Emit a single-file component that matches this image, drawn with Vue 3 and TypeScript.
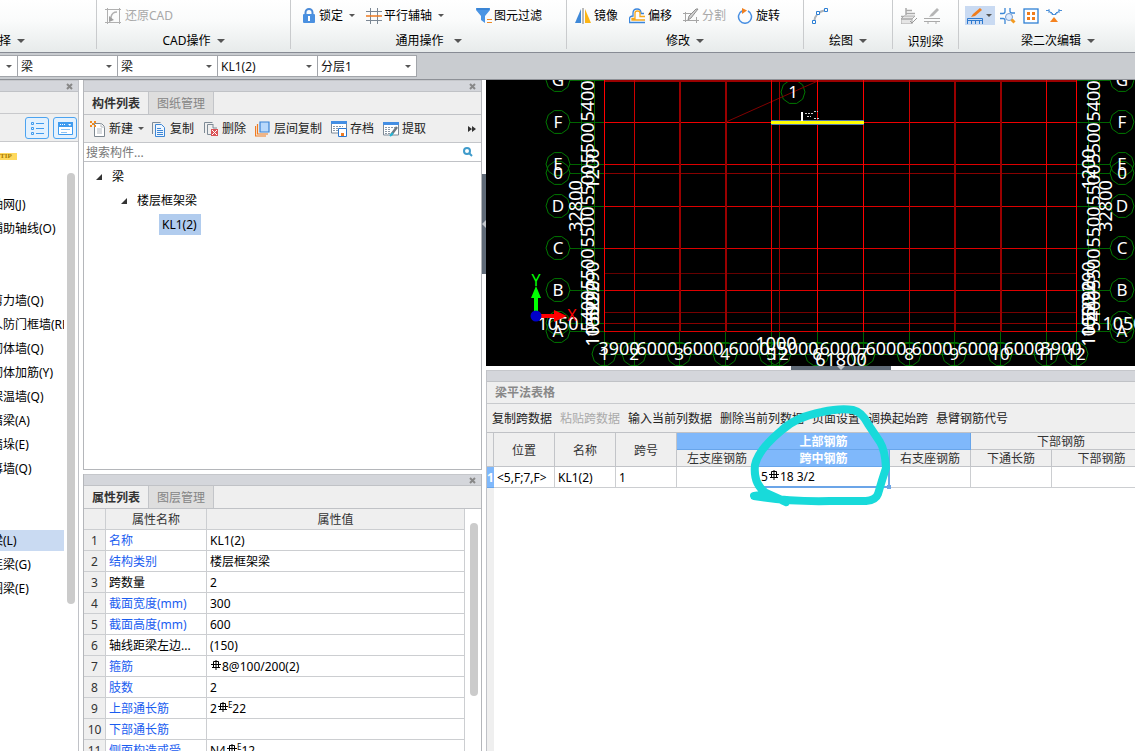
<script setup lang="ts">
import { ref } from 'vue'

interface Tool { icon: string; label?: string; aria?: string; caret?: boolean; off?: boolean; active?: boolean }
interface Group { name: string; title: string; caret: boolean; tools: Tool[] }

const icons: Record<string, string> = {
  restore: '<g fill="none" stroke="#b0b0b0"><path d="M2.500 0V16M14.500 0V16M0 1.500H16M0 14.500H16"/><path d="M6 12V9q1-5 6-5" stroke-width="1.500"/></g><path d="M4 8l5 4-5 2z" fill="#a0a0a0"/>',
  lock: '<path d="M4.500 7V4.500a3.500 3.500 0 0 1 7 0V7" fill="none" stroke="#4b8bd8" stroke-width="2"/><rect x="2" y="6" width="12" height="9" rx="1" fill="#4a90e0"/><path d="M8 8v5M7 9.500h2" stroke="#fff" stroke-width="2"/>',
  hash: '<path d="M4.500 0V16M11.500 0V16M0 3.500H16M0 12.500H16" stroke="#7b8794" fill="none"/><path d="M0 8H16" stroke="#ee7b22" stroke-width="1.500"/>',
  filter: '<path d="M0 0h14v2L9 8v7l-4-3V8L0 2z" fill="#4b95e4"/><path d="M1 1h12" stroke="#2c74c4"/><path d="M11 11.500h5M11 14.500h5" stroke="#f08a24"/>',
  mirror: '<path d="M6 1v14H0z" fill="#3e88d8"/><path d="M10 1v14h6z" fill="#fdb515"/><path d="M8 0v16" stroke="#777"/>',
  offset: '<path d="M15 5.500h-3V5q0-4-4-4T4 5v3q-3.500 0-3.500 3v3.500H16" fill="none" stroke="#3b86dc" stroke-width="1.300"/><path d="M16 8.500h-5V5q0-2-2.500-2T6 5v5.500H3q0 1 0 1.500h13" fill="none" stroke="#f6a81c" stroke-width="1.300"/>',
  split: '<path d="M2.500 4v10M0 5.500h9M0 12.500h16M13.500 9v6" stroke="#a6a6a6" fill="none"/><path d="M15 1L8 10l-3 2 1-4 7-7z" fill="#d0d0d0" stroke="#8f8f8f"/>',
  rotate: '<path d="M11 3a6.500 6.500 0 1 1-6 0" fill="none" stroke="#4a90e2" stroke-width="1.500"/><path d="M5 0l5 2.500L5 6z" fill="#f08020"/>',
  arc: '<path d="M2 14Q3 4 14 2" fill="none" stroke="#aeb4ba" stroke-width="2"/><g fill="#fff" stroke="#2d7fd4"><path d="M.500 12.500h3v3h-3zM4.500 3.500h3v3h-3zM12.500.500h3v3h-3z"/></g>',
  detect: '<path d="M5 0v7M5 2.500h6M5 5.500h9M0 8.500h5" stroke="#aaa" stroke-width="1.500" fill="none"/><path d="M3 8h11l-3 3H0zM0 11h11v5H0z" fill="#e5e5e5" stroke="#aaa"/><path d="M9 13l2 2 5-5" fill="none" stroke="#999"/>',
  mark: '<path d="M0 10.500h16M0 13.500h16M4 13v3M12 13v3" stroke="#aaa" fill="none"/><path d="M13 0l2 2-6 6-4 1 2-3z" fill="#b5b5b5"/>',
  annotate: '<path d="M.500 16V10.500h15V16M4.500 16v-3M8.500 16v-3M12.500 16v-3M0 12.500h16" stroke="#2f7bd0" fill="none"/><path d="M13 0l2 2-7 6-4 1 2-3z" fill="#f07c1c"/>',
  inspect: '<g stroke="#3c88d8" fill="none" stroke-width="1.300"><path d="M0 5.500h3q2 0 2-2V0M10 0v3q0 2 2 2h3M0 10.500h3q2 0 2 2V16"/></g><circle cx="9" cy="9" r="3.500" fill="#dcebff" stroke="#729bd0"/><path d="M11.500 11.500l3 3" stroke="#f39a20" stroke-width="3"/>',
  points: '<rect x="1" y="1" width="14" height="14" fill="#fff" stroke="#2f80d5" stroke-width="1.300"/><path d="M4 4h3v3H4zM9 4h3v3H9zM4 9h3v3H4zM9 9h3v3H9z" fill="#f07c1c"/>',
  hanger: '<path d="M0 2.500h3l3 4h4l3-4h3M3 5v-4M13 5v-4M7 6l-2-2M9 6l2-2" fill="none" stroke="#4b8fd8"/><path d="M8 9l4 5H4z" fill="#f58320"/>',
  add: '<path d="M4.500 2.500h7l3 3v10h-10z" fill="#fff" stroke="#7d8790"/><path d="M11 2v4h4M7 8h5M7 10h5M7 12h5" fill="none" stroke="#b4bac0"/><path d="M0 0h2v2H0zM4 0h2v2H4zM2 2h2v2H2zM0 4h2v2H0zM4 4h2v2H4z" fill="#f08b20"/>',
  copy: '<path d="M1.500 13V1.500h8" fill="none" stroke="#7b8b9a"/><path d="M4.500 3.500h6l3 3v9h-9z" fill="#eef6ff" stroke="#3d86d5"/><path d="M6 7.500h4M6 9.500h6M6 11.500h6M6 13.500h6" stroke="#3d86d5"/>',
  remove: '<path d="M1.500 12V1.500h8M10 3.500H4.500v10H8M10 3v4h4" fill="none" stroke="#7e8b96"/><path d="M8 8h7v7H8z" fill="#db5357"/><path d="M9 9l5 5M14 9l-5 5" stroke="#fff"/>',
  layers: '<path d="M.500 5v10H11M2.500 3v10H13" fill="none" stroke="#f07c22" stroke-width="1.200"/><path d="M5 1h9v10H5z" fill="#b8d8fb" stroke="#3982d5" stroke-width="1.200"/>',
  archive: '<path d="M.500 1h15v11H.500z" fill="#fff" stroke="#7c8996"/><path d="M0 0h16v3H0z" fill="#438ee3"/><path d="M2 5.500h10M2 7.500h5M2 9.500h5" stroke="#8b98a5" stroke-dasharray="2 1"/><path d="M7.500 7.500h8v8h-8z" fill="#fff" stroke="#2b76cf"/><path d="M10 12h3v3h-3z" fill="#f07c22"/>',
  extract: '<path d="M.500 2h15v12H.500z" fill="#fff" stroke="#7c8996"/><path d="M0 1h16v3H0z" fill="#438ee3"/><path d="M2 6.500h10M2 8.500h6M2 10.500h6M2 12.500h5" stroke="#8b98a5" stroke-dasharray="2 1"/><path d="M8 14l6-8" stroke="#6d7780" stroke-width="2.500"/><path d="M7 15l3-3" stroke="#22b7d8" stroke-width="2"/>',
}

const groups: Group[] = [
  { name: 'pick', title: '选择', caret: true, tools: [] },
  { name: 'cad', title: 'CAD操作', caret: true, tools: [{ icon: 'restore', label: '还原CAD', off: true }] },
  { name: 'common', title: '通用操作', caret: true, tools: [
    { icon: 'lock', label: '锁定', caret: true }, { icon: 'hash', label: '平行辅轴', caret: true }, { icon: 'filter', label: '图元过滤' }] },
  { name: 'modify', title: '修改', caret: true, tools: [
    { icon: 'mirror', label: '镜像' }, { icon: 'offset', label: '偏移' }, { icon: 'split', label: '分割', off: true }, { icon: 'rotate', label: '旋转' }] },
  { name: 'draw', title: '绘图', caret: true, tools: [{ icon: 'arc', aria: '弧线' }] },
  { name: 'detect', title: '识别梁', caret: false, tools: [{ icon: 'detect', aria: '识别', off: true }, { icon: 'mark', aria: '标注', off: true }] },
  { name: 'edit', title: '梁二次编辑', caret: true, tools: [
    { icon: 'annotate', aria: '原位标注', caret: true, active: true }, { icon: 'inspect', aria: '查看' }, { icon: 'points', aria: '支座' }, { icon: 'hanger', aria: '吊筋' }] },
]

const filters = [
  { name: '楼层', value: '' }, { name: '类别', value: '梁' }, { name: '类型', value: '梁' },
  { name: '构件', value: 'KL1(2)' }, { name: '分层', value: '分层1' },
]

const navItems = ['轴网(J)', '辅助轴线(O)', '', '', '剪力墙(Q)', '人防门框墙(RF)', '砌体墙(Q)', '砌体加筋(Y)', '保温墙(Q)',
  '暗梁(A)', '墙垛(E)', '幕墙(Q)', '', '', '梁(L)', '连梁(G)', '圈梁(E)']
const current = ref('梁(L)')

const listTools: Tool[] = [
  { icon: 'add', label: '新建', caret: true }, { icon: 'copy', label: '复制' }, { icon: 'remove', label: '删除' },
  { icon: 'layers', label: '层间复制' }, { icon: 'archive', label: '存档' }, { icon: 'extract', label: '提取' },
]
const search = ref('')

// "#" stands for the bar-grade sign, "~" for its seismic variant
const properties = [
  { name: '名称', value: 'KL1(2)', key: true }, { name: '结构类别', value: '楼层框架梁', key: true },
  { name: '跨数量', value: '2', key: false }, { name: '截面宽度(mm)', value: '300', key: true },
  { name: '截面高度(mm)', value: '600', key: true }, { name: '轴线距梁左边...', value: '(150)', key: false },
  { name: '箍筋', value: '#8@100/200(2)', key: true }, { name: '肢数', value: '2', key: true },
  { name: '上部通长筋', value: '2~22', key: true }, { name: '下部通长筋', value: '', key: true },
  { name: '侧面构造或受...', value: 'N4~12', key: true },
]
const parts = (value: string) => value.split(/([#~])/).filter(Boolean)

const tableTools = ['复制跨数据', '粘贴跨数据', '输入当前列数据', '删除当前列数据', '页面设置', '调换起始跨', '悬臂钢筋代号']

const columns = [
  { x: 604, c: '#f00', w: 1, n: '1' }, { x: 634, c: '#c00', w: 1, n: '2' }, { x: 679, c: '#900', w: 2, n: '3' },
  { x: 725, c: '#900', w: 2, n: '4' }, { x: 771, c: '#e00', w: 1, n: '5' }, { x: 779, c: '#900', w: 1, n: '12' },
  { x: 817, c: '#f00', w: 1, n: '6' }, { x: 863, c: '#f00', w: 1, n: '7' }, { x: 909, c: '#c00', w: 1, n: '8' },
  { x: 954, c: '#900', w: 2, n: '9' }, { x: 1000, c: '#900', w: 2, n: '10' }, { x: 1046, c: '#e00', w: 1, n: '11' },
  { x: 1076, c: '#f00', w: 1, n: '12' },
]
const rows = [
  { y: 80, c: '#900', n: 'G' }, { y: 122, c: '#e00', n: 'F' }, { y: 164, c: '#d00', n: 'E' }, { y: 173, c: '#800', n: '0' },
  { y: 206, c: '#d00', n: 'D' }, { y: 248, c: '#d00', n: 'C' }, { y: 273, c: '#600', n: '' }, { y: 290, c: '#d00', n: 'B' },
  { y: 312, c: '#700', n: '' }, { y: 323, c: '#800', n: ' ' }, { y: 331, c: '#d00', n: 'A' },
]
const bubble = (cx: number, cy: number) =>
  Array.from({ length: 10 }, (_, i) => {
    const a = (i * Math.PI) / 5
    return `${(cx + 12 * Math.cos(a)).toFixed(1)},${(cy + 12 * Math.sin(a)).toFixed(1)}`
  }).join(' ')

const sideDims = [
  { t: '5400', y: 101, d: 0 }, { t: '5500', y: 143, d: 0 }, { t: '5500', y: 185, d: 0 }, { t: '5500', y: 227, d: 0 },
  { t: '5500', y: 269, d: 0 }, { t: '5400', y: 311, d: 0 }, { t: '1200', y: 169, d: 1 }, { t: '2290', y: 282, d: 1 },
  { t: '3290', y: 301, d: 1 }, { t: '1050', y: 317, d: 1 }, { t: '1050', y: 326, d: 1 }, { t: '32800', y: 206, d: 2 },
]
const leftX = [594, 599, 582]
const rightX = [1100, 1095, 1112]
const bottomDims = [
  { t: '3900', x: 619 }, { t: '6000', x: 657 }, { t: '6000', x: 703 }, { t: '6000', x: 749 }, { t: '5000', x: 798 },
  { t: '6000', x: 840 }, { t: '6000', x: 886 }, { t: '6000', x: 932 }, { t: '6000', x: 978 }, { t: '6000', x: 1024 }, { t: '3900', x: 1061 },
]
</script>

<template>
  <div class="app">
    <header class="ribbon">
      <section v-for="g in groups" :key="g.name" class="group" :class="g.name">
        <div class="tools">
          <button v-for="t in g.tools" :key="t.icon" type="button" class="tool" :class="{ active: t.active }" :disabled="t.off" :aria-label="t.aria">
            <svg class="icon" viewBox="0 0 16 16" aria-hidden="true" v-html="icons[t.icon]"></svg>
            <span v-if="t.label">{{ t.label }}</span>
            <i v-if="t.caret" class="caret"></i>
          </button>
        </div>
        <button type="button" class="title">{{ g.title }}<i v-if="g.caret" class="caret big"></i></button>
      </section>
    </header>

    <div class="filters">
      <label v-for="(f, i) in filters" :key="f.name" class="filter" :class="{ cut: i === 0 }">
        <select :aria-label="f.name"><option>{{ f.value }}</option></select>
        <i class="caret"></i>
      </label>
    </div>

    <div class="body">
      <aside class="nav">
        <div class="bar"><button type="button" class="close" aria-label="关闭导航"><svg viewBox="0 0 7 7"><path d="M1 1l5 5M6 1l-5 5" /></svg></button></div>
        <div class="strip"></div>
        <div class="modes">
          <button type="button" aria-label="列表"><svg viewBox="0 0 22 20"><path d="M5.500 4.500h2v2h-2zM5.500 9.500h2v2h-2zM5.500 14.500h2v2h-2z" fill="none" stroke="#3f9bef" /><path d="M10 5.500h8M10 10.500h8M10 15.500h8" stroke="#3f9bef" /></svg></button>
          <button type="button" aria-label="面板"><svg viewBox="0 0 22 20"><path d="M4.500 4.500h14v12h-14z" fill="#fff" stroke="#3f9bef" /><path d="M4 4h15v5H4z" fill="#3f9bef" /><path d="M6 6.500h1M8 6.500h1M10 6.500h1" stroke="#fff" /><path d="M7 11.500h9M7 14.500h6" stroke="#8ac2f5" /><path d="M14 6h3l-1 2z" fill="#fff" /></svg></button>
        </div>
        <div class="scroller">
          <div class="nav-list">
            <span class="tip">TIP</span>
            <ul>
              <li v-for="(n, i) in navItems" :key="i">
                <button v-if="n" type="button" :class="{ current: n === current }" @click="current = n">{{ n }}</button>
              </li>
            </ul>
          </div>
          <div class="track"><div class="thumb"></div></div>
        </div>
      </aside>

      <div class="middle">
        <section class="panel list">
          <div class="bar"><button type="button" class="close" aria-label="关闭构件列表"><svg viewBox="0 0 7 7"><path d="M1 1l5 5M6 1l-5 5" /></svg></button></div>
          <div class="tabs"><button type="button" class="on">构件列表</button><button type="button">图纸管理</button></div>
          <div class="list-tools">
            <button v-for="t in listTools" :key="t.icon" type="button" class="tool">
              <svg class="icon" viewBox="0 0 16 16" aria-hidden="true" v-html="icons[t.icon]"></svg>
              <span>{{ t.label }}</span><i v-if="t.caret" class="caret"></i>
            </button>
            <button type="button" class="more" aria-label="更多"><svg viewBox="0 0 8 6"><path d="M0 0l4 3-4 3zM4 0l4 3-4 3z" /></svg></button>
          </div>
          <div class="search">
            <input v-model="search" type="text" aria-label="搜索构件" placeholder="搜索构件..." />
            <button type="button" aria-label="搜索"><svg viewBox="0 0 10 10"><circle cx="4" cy="4" r="3" /><path d="M6 6l3 3" /></svg></button>
          </div>
          <ul class="tree">
            <li><button type="button"><i class="fold"></i>梁</button>
              <ul>
                <li><button type="button"><i class="fold"></i>楼层框架梁</button>
                  <ul><li><button type="button" class="leaf">KL1(2)</button></li></ul>
                </li>
              </ul>
            </li>
          </ul>
        </section>

        <section class="panel props">
          <div class="bar"><button type="button" class="close" aria-label="关闭属性列表"><svg viewBox="0 0 7 7"><path d="M1 1l5 5M6 1l-5 5" /></svg></button></div>
          <div class="tabs"><button type="button" class="on">属性列表</button><button type="button">图层管理</button></div>
          <div class="props-body">
            <table>
              <colgroup><col class="c-no" /><col class="c-name" /><col /></colgroup>
              <thead><tr><th></th><th>属性名称</th><th>属性值</th></tr></thead>
              <tbody>
                <tr v-for="(p, i) in properties" :key="p.name">
                  <th scope="row">{{ i + 1 }}</th>
                  <td :class="{ key: p.key }">{{ p.name }}</td>
                  <td><template v-for="(s, j) in parts(p.value)" :key="j"><template v-if="s === '#' || s === '~'"><svg class="rebar" viewBox="0 0 10 12"><path d="M5 0v10M0 4.500h10M1 7.500h8M2.500 1.500h5v6h-5z" /></svg><sup v-if="s === '~'">E</sup></template><template v-else>{{ s }}</template></template></td>
                </tr>
              </tbody>
            </table>
            <div class="track"><div class="thumb"></div></div>
          </div>
        </section>
      </div>

      <div class="splitter"><button type="button" aria-label="收起面板"><svg viewBox="0 0 4 8"><path d="M4 0v8L0 4z" /></svg></button></div>

      <main class="work">
        <svg class="drawing" viewBox="486 80 649 286" preserveAspectRatio="xMinYMin slice" role="img" aria-label="轴网与梁">
          <g shape-rendering="crispEdges" stroke="#006400" fill="none">
            <path d="M581.500 80V332M594.500 80V332M1088.500 80V332M1099.500 80V332M604 343.500H1076M604 354.500H1076" />
            <template v-for="r in rows" :key="r.y"><path v-if="r.n" :d="`M570 ${r.y + 0.5}H604M1076 ${r.y + 0.5}H1110`" /></template>
            <path v-for="(c, i) in columns" :key="i" :d="`M${c.x + 0.5} 332V366`" />
          </g>
          <g fill="none" stroke="#007800">
            <template v-for="r in rows" :key="r.y"><template v-if="r.n"><polygon :points="bubble(558, r.y)" /><polygon :points="bubble(1122, r.y)" /></template></template>
            <polygon v-for="(c, i) in columns" :key="i" :points="bubble(c.x, 354)" />
            <polygon :points="bubble(793, 92)" />
          </g>
          <path d="M726 122L820 80" stroke="#800000" fill="none" />
          <g shape-rendering="crispEdges">
            <rect v-for="r in rows" :key="r.y" x="604" :y="r.y" width="473" :height="r.y === 80 ? 2 : 1" :fill="r.c" />
            <rect v-for="(c, i) in columns" :key="i" :x="c.x" y="80" :width="c.w" height="252" :fill="c.c" />
          </g>
          <path d="M771 122.500H864" stroke="#5477b0" stroke-width="5" /><path d="M771 122.500H864" stroke="#ff0" stroke-width="3" />
          <path d="M802 112v9" stroke="#fff" stroke-width="2" /><path d="M805 113.500h9M807 116.500h4M814 111.500h4M814 118.500h5" stroke="#ccc" stroke-dasharray="2 1" />
          <g class="dims">
            <template v-for="(s, i) in sideDims" :key="i">
              <text :transform="`translate(${leftX[s.d]} ${s.y}) rotate(-90)`">{{ s.t }}</text>
              <text :transform="`translate(${rightX[s.d]} ${s.y}) rotate(-90)`">{{ s.t }}</text>
            </template>
            <text v-for="(b, i) in bottomDims" :key="i" :x="b.x" y="355">{{ b.t }}</text>
            <text x="776" y="350">1000</text><text x="841" y="366">61800</text>
            <text x="558" y="330">1050</text><text x="1123" y="330">1050</text>
          </g>
          <g class="marks">
            <template v-for="r in rows" :key="r.y"><text x="558" :y="r.y + 6">{{ r.n }}</text><text x="1122" :y="r.y + 6">{{ r.n }}</text></template>
            <text v-for="(c, i) in columns" :key="i" :x="c.x" y="360">{{ c.n }}</text>
            <text x="793" y="98">1</text>
          </g>
          <path d="M534 316V298h-3l5-12 5 12h-3v18z" fill="#0f0" /><path d="M536 314h18v-4l13 6-13 6v-4h-18z" fill="#f00" />
          <circle cx="536" cy="316" r="5.500" fill="#0000c8" />
          <g class="axes"><text x="536" y="286" fill="#0f0">Y</text><text x="572" y="321" fill="#f00">X</text></g>
        </svg>
        <div class="hsplit"><button type="button" aria-label="展开表格"><svg viewBox="0 0 8 4"><path d="M0 0h8L4 4z" /></svg></button></div>

        <section class="sheet">
          <div class="bar"></div>
          <h2>梁平法表格</h2>
          <div class="sheet-tools"><button v-for="(t, i) in tableTools" :key="t" type="button" :disabled="i === 1">{{ t }}</button></div>
          <div class="grid">
            <table>
              <colgroup><col class="g0" /><col class="g1" /><col class="g1" /><col class="g1" /><col class="g2" /><col class="g3" /><col class="g2" /><col class="g2" /><col class="g4" /></colgroup>
              <thead>
                <tr><th rowspan="2"></th><th rowspan="2">位置</th><th rowspan="2">名称</th><th rowspan="2">跨号</th><th colspan="3" class="hot">上部钢筋</th><th colspan="2">下部钢筋</th></tr>
                <tr><th>左支座钢筋</th><th class="hot">跨中钢筋</th><th>右支座钢筋</th><th>下通长筋</th><th>下部钢筋</th></tr>
              </thead>
              <tbody>
                <tr><th scope="row" class="hot number">1</th><td>&lt;5,F;7,F&gt;</td><td>KL1(2)</td><td>1</td><td></td>
                  <td class="editing">5<svg class="rebar" viewBox="0 0 10 12"><path d="M5 0v10M0 4.500h10M1 7.500h8M2.500 1.500h5v6h-5z" /></svg>18 3/2<i class="grip"></i></td><td></td><td></td><td></td></tr>
              </tbody>
            </table>
          </div>
          <svg class="circled" viewBox="745 400 150 110" aria-hidden="true"><path d="M767 494L754 496Q790 502 830 501L866 501Q876 500 878 494Q882 480 886 468Q885 450 880 442L868 424Q862 412 853 410Q840 408 822 412Q796 417 782 430Q758 450 755 465Q753 484 766 493L786 502" /></svg>
        </section>
      </main>
    </div>
  </div>
</template>

<style>
body { margin: 0; }
#app { min-height: 100vh; }
</style>

<style scoped>
.app, .app * { box-sizing: border-box; }
.app { height: 100vh; overflow: hidden; display: flex; flex-direction: column; font: 12px/16px "Noto Sans", "Noto Sans CJK SC", sans-serif; color: #000; background: #fff; }
button { font: inherit; color: inherit; border: 0; padding: 0; margin: 0; background: none; white-space: nowrap; }
ul { list-style: none; margin: 0; padding: 0; }
svg { display: block; }
.caret { display: inline-block; flex: none; border: 3px solid transparent; border-top-color: #555; border-bottom: 0; }
.caret.big { border-width: 4px 4px 0; }

.ribbon { flex: none; display: flex; height: 53px; border-bottom: 1px solid #878b94; background: linear-gradient(#fff, #fafbfb 40%, #e7ebeb); }
.group { flex: none; display: flex; flex-direction: column; align-items: center; border-right: 1px solid #c9cbcd; height: 49px; }
.tools { flex: none; display: flex; align-items: center; height: 31px; width: 100%; }
.tool { display: flex; align-items: center; gap: 4px; }
.tool:disabled { color: #a8a8a8; }
.icon { width: 16px; height: 16px; flex: none; }
.title { flex: none; display: flex; align-items: center; gap: 6px; height: 18px; padding-top: 1px; }
.pick { width: 97px; align-items: flex-start; }
.pick .title { margin-left: -13px; }
.cad { width: 194px; }
.cad .tools { padding-left: 8px; }
.common { width: 276px; }
.common .tools { padding-left: 10px; gap: 11px; }
.common .tool { gap: 2px; }
.common .caret { margin-left: 4px; }
.common .tool:last-child { margin-left: 21px; }
.modify { width: 237px; }
.modify .tools { padding-left: 8px; gap: 11px; }
.modify .tool { gap: 3px; }
.draw { width: 89px; }
.draw .tools { padding-left: 8px; }
.detect { width: 66px; }
.detect .tools { padding-left: 8px; gap: 7px; }
.detect .title { height: 20px; padding-top: 2px; }
.edit { flex: 1; border: 0; }
.edit .tools { padding-left: 6px; gap: 7px; }
.edit .title { margin-left: 22px; }
.tool.active { background: #c9daf2; height: 19px; padding: 0 3px 0 2px; gap: 3px; margin-right: -2px; }

.filters { flex: none; display: flex; height: 27px; padding: 2px 0; background: #c9ccd0; border-bottom: 1px solid #8e9197; }
.filter { position: relative; width: 100px; border: 1px solid #a2a5aa; border-right-width: 0; background: #fff; }
.filter:last-child { border-right-width: 1px; }
.filter.cut { width: 17px; border-left-width: 0; }
.filter select { width: 100%; height: 100%; border: 0; padding: 1px 3px 0; appearance: none; background: none; font: inherit; color: #111; }
.filter .caret { position: absolute; right: 5px; top: 9px; pointer-events: none; }

.body { flex: 1; min-height: 0; display: flex; }
.bar { flex: none; height: 12px; display: flex; align-items: center; justify-content: flex-end; padding-right: 5px; background: #d4d6db; border-top: 1px solid #c5c7cb; border-bottom: 1px solid #c0c2c6; }
.close svg { width: 7px; height: 7px; fill: none; stroke: #888; stroke-width: 2; }
.nav { flex: none; width: 79px; display: flex; flex-direction: column; border-right: 1px solid #c0c2c7; }
.strip { flex: none; height: 22px; background: #efefef; border-bottom: 1px solid #c8c9cc; }
.modes { flex: none; height: 28px; display: flex; gap: 4px; align-items: center; justify-content: flex-end; padding-right: 1px; background: #efefef; border-bottom: 1px solid #c8c9cc; }
.modes button { width: 24px; height: 22px; border: 1px solid #4ca3f0; border-radius: 3px; background: #e3f1fe; }
.scroller { flex: 1; min-height: 0; display: flex; }
.nav-list { width: 64px; overflow: hidden; padding-top: 11px; }
.tip { display: block; width: 17px; height: 7px; margin-bottom: 34px; background: #ffd95c; color: #a87b00; font: bold 7px/7px "Liberation Serif", serif; }
.nav-list li { height: 24px; }
.nav-list button { display: block; width: 100%; height: 21px; text-align: left; text-indent: -9px; overflow: hidden; }
.nav-list .current { background: #c9daf2; }
.track { flex: none; }
.thumb { width: 8px; border-radius: 4px; background: #cbcbcb; }
.nav .track { padding: 31px 0 0 3px; }
.nav .thumb { height: 431px; }

.middle { flex: none; width: 399px; margin-left: 4px; display: flex; flex-direction: column; gap: 4px; }
.panel { display: flex; flex-direction: column; border: 1px solid #b4b6ba; border-top: 0; }
.list { flex: none; height: 390px; }
.props { flex: 1; min-height: 0; border-bottom: 0; }
.tabs { flex: none; display: flex; height: 23px; background: #efefef; border-bottom: 1px solid #c0c2c6; }
.tabs button { width: 65px; padding-top: 1px; background: #dedede; color: #858585; border-right: 1px solid #c3c5c9; }
.tabs .on { background: #efefef; color: #333; font-weight: bold; }
.list-tools { flex: none; display: flex; align-items: center; gap: 9px; height: 28px; padding: 0 5px 0 6px; background: #efefef; border-bottom: 1px solid #c4c6ca; color: #222; }
.list-tools .tool { gap: 3px; }
.list-tools .tool:first-child { margin-right: -2px; }
.list-tools .tool .caret { margin-left: 2px; }
.list-tools .more { margin-left: auto; }
.more svg { width: 8px; height: 6px; fill: #333; }
.search { flex: none; display: flex; align-items: center; height: 19px; padding: 0 8px 0 2px; border-bottom: 1px solid #c0c2c6; }
.search input { flex: 1; min-width: 0; height: 18px; border: 0; padding: 1px 0 0; outline: 0; font: inherit; }
.search input::placeholder { color: #777; opacity: 1; }
.search svg { width: 10px; height: 10px; fill: none; stroke: #3f9bcb; stroke-width: 2; }
.tree { padding: 3px 0 0 12px; }
.tree ul { padding-left: 25px; }
.tree button { display: flex; align-items: center; gap: 10px; height: 24px; }
.tree ul ul { padding-left: 38px; }
.tree .leaf { height: 21px; margin-top: 1px; padding: 0 4px 0 3px; background: #b1ccee; }
.fold { border: 3px solid; border-color: transparent #333 #333 transparent; }

.props-body { flex: 1; min-height: 0; display: flex; overflow: hidden; }
table { border-collapse: separate; border-spacing: 0; table-layout: fixed; }
th { font-weight: normal; color: #333; background: #efefef; }
th, td { padding: 0; white-space: nowrap; overflow: hidden; border-right: 1px solid #ccced1; border-bottom: 1px solid #ccced1; }
.props table { flex: 1; width: 0; align-self: flex-start; }
.props th, .props td { height: 21px; padding-top: 1px; }
.props td { padding-left: 3px; }
.c-no { width: 22px; }
.c-name { width: 101px; }
td.key { color: #1a5df0; }
.props .track { width: 16px; padding: 14px 0 0 5px; }
.props .thumb { height: 173px; }
.rebar { display: inline-block; width: 10px; height: 12px; margin: 0 1px; vertical-align: -1px; fill: none; stroke: #000; }
sup { font-size: 8px; line-height: 8px; vertical-align: 5px; margin-left: -1px; }

.splitter { flex: none; width: 4px; padding-top: 94px; }
.splitter button { display: flex; align-items: center; width: 4px; height: 100px; background: #606b78; }
.splitter svg { width: 4px; height: 8px; fill: #c2c6cb; }
.hsplit { flex: none; height: 4px; display: flex; justify-content: center; padding-left: 60px; }
.hsplit button { width: 100px; height: 4px; background: #606b78; }
.hsplit svg { width: 8px; height: 4px; margin: 0 auto; fill: #c2c6cb; }
.work { flex: 1; min-width: 0; display: flex; flex-direction: column; }
.drawing { flex: none; width: 100%; height: 286px; background: #000; }
.drawing text { text-anchor: middle; font-family: "Noto Sans", sans-serif; }
.dims, .marks { fill: #fff; font-size: 18px; }
.marks { font-size: 17px; }
.axes { font-size: 16px; }

.sheet { position: relative; flex: 1; min-height: 0; display: flex; flex-direction: column; border-left: 1px solid #c0c2c7; }
h2 { flex: none; margin: 0; height: 22px; padding-left: 8px; font: bold 12px/22px "Noto Sans", "Noto Sans CJK SC", sans-serif; color: #888; background: #efefef; border-bottom: 1px solid #c8cacd; }
.sheet-tools { flex: none; display: flex; align-items: center; gap: 8px; height: 28px; padding: 2px 0 0 5px; background: #efefef; color: #222; }
.sheet-tools button:disabled { color: #aaa; }
.grid { flex: 1; min-height: 0; overflow: hidden; border-top: 1px solid #c0c2c6; background: linear-gradient(90deg, #efefef 7px, #fff 7px); }
.grid table { width: 665px; }
.g0 { width: 7px; }
.g1 { width: 61px; }
.g2 { width: 81px; }
.g3 { width: 132px; }
.g4 { width: 100px; }
.grid th { height: 17px; padding-top: 1px; line-height: 15px; border-color: #c2c4c8; }
.grid .hot { background: #7fb8fb; color: #fff; font-weight: bold; border-color: #68a5ea; }
.grid .number { overflow: visible; border-right: 0; }
.grid td { height: 21px; padding: 1px 0 0 3px; }
.grid .editing { position: relative; overflow: visible; border-right: 2px solid #6ba5e8; border-bottom: 2px solid #6ba5e8; }
.grip { position: absolute; right: -3px; bottom: -3px; width: 4px; height: 4px; background: #6ba5e8; }
.circled { position: absolute; left: 258px; top: 30px; width: 150px; height: 110px; pointer-events: none; fill: none; stroke: #18dada; stroke-width: 8; stroke-linejoin: round; stroke-linecap: round; }
</style>
